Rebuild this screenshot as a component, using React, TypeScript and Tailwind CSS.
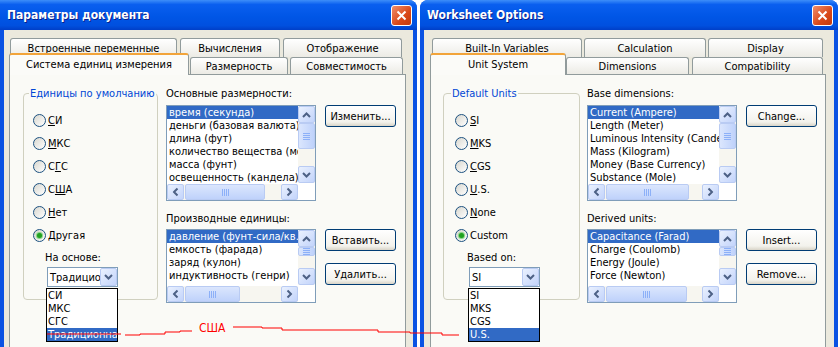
import React from "react";

type Tab = { label: string; cls: string };

const font = "font-['DejaVu_Sans_Condensed','DejaVu_Sans',sans-serif]";

function ScrollBtn({ dir, cls = "w-[17px] h-[17px]" }: { dir: "up" | "down" | "left" | "right"; cls?: string }) {
  const rot = { up: "rotate-180", down: "", left: "rotate-90", right: "-rotate-90" }[dir];
  return (
    <div className={`${cls} shrink-0 rounded-[2px] border border-[#b9cbf3] bg-[linear-gradient(135deg,#eaf1fe,#c3d4fb)] flex items-center justify-center`}>
      <svg width="9" height="6" viewBox="0 0 9 6" className={rot}>
        <path d="M1 1 L4.5 4.5 L8 1" fill="none" stroke="#4d6185" strokeWidth="2" />
      </svg>
    </div>
  );
}

function VScroll({ thumb }: { thumb: string }) {
  return (
    <div className="w-[17px] flex flex-col bg-[#f7f6f0]">
      <ScrollBtn dir="up" />
      <div className={`${thumb} w-[17px] rounded-[2px] border border-[#b9cbf3] bg-[linear-gradient(to_right,#dbe6fd,#bfd2fb)] flex flex-col items-center justify-center gap-[1px]`}>
        <span className="w-[7px] h-[1px] bg-[#8cb0f8]" />
        <span className="w-[7px] h-[1px] bg-[#8cb0f8]" />
        <span className="w-[7px] h-[1px] bg-[#8cb0f8]" />
        <span className="w-[7px] h-[1px] bg-[#8cb0f8]" />
      </div>
      <div className="flex-1" />
      <ScrollBtn dir="down" />
    </div>
  );
}

function HScroll({ thumb }: { thumb: string }) {
  return (
    <div className="flex-1 flex bg-[#f7f6f0]">
      <ScrollBtn dir="left" cls="w-[17px] h-[16px]" />
      <div className={`${thumb} h-[16px] ml-[1px] rounded-[2px] border border-[#b9cbf3] bg-[linear-gradient(to_bottom,#dbe6fd,#bfd2fb)] flex items-center justify-center gap-[1px]`}>
        <span className="w-[1px] h-[7px] bg-[#8cb0f8]" />
        <span className="w-[1px] h-[7px] bg-[#8cb0f8]" />
        <span className="w-[1px] h-[7px] bg-[#8cb0f8]" />
        <span className="w-[1px] h-[7px] bg-[#8cb0f8]" />
      </div>
      <div className="flex-1" />
      <ScrollBtn dir="right" cls="w-[17px] h-[16px]" />
    </div>
  );
}

function ListBox({ items, h, vThumb, hThumb }: { items: string[]; h: string; vThumb: string; hThumb: string }) {
  return (
    <div className={`${h} border border-[#7f9db9] bg-white flex flex-col`}>
      <div className="flex flex-1 min-h-0">
        <div className="flex-1 min-w-0 overflow-hidden">
          {items.map((t, i) => (
            <div
              key={t}
              className={`h-[13px] leading-[13px] pl-[2px] whitespace-nowrap ${i === 0 ? "bg-[#316ac5] text-white" : ""}`}
            >
              {t}
            </div>
          ))}
        </div>
        <VScroll thumb={vThumb} />
      </div>
      <div className="flex h-[16px] mt-[1px]">
        <HScroll thumb={hThumb} />
        <div className="w-[17px] bg-white" />
      </div>
    </div>
  );
}

function Btn({ children, cls = "" }: { children: React.ReactNode; cls?: string }) {
  return (
    <button className={`${cls} h-[22px] w-[71px] rounded-[3px] border border-[#003c74] bg-[linear-gradient(to_bottom,#ffffff,#f3f2ec_80%,#d9d4c8)] flex items-center justify-center leading-[13px] text-black`}>
      {children}
    </button>
  );
}

function Radio({ label, checked }: { label: React.ReactNode; checked?: boolean }) {
  return (
    <div className="flex items-center h-[23px]">
      <span className="w-[13px] h-[13px] rounded-full border border-[#1c5180] bg-[linear-gradient(135deg,#d8d7cf,#ffffff)] flex items-center justify-center">
        {checked && <span className="w-[5px] h-[5px] rounded-full bg-[#21a121] shadow-[0_0_1px_1px_#7bd17b]" />}
      </span>
      <span className="ml-[2px] leading-[13px]">{label}</span>
    </div>
  );
}

type DialogProps = {
  title: string;
  frame: string;
  round: string;
  tabsWrap: string;
  row1: Tab[];
  active: Tab;
  row2: Tab[];
  panelPad: string;
  group: { legend: string; w: string; pad: string; radios: React.ReactNode[] };
  basedOn: string;
  comboText: string;
  popup: string[];
  midMl: string;
  baseLabel: string;
  baseItems: string[];
  baseThumb: string;
  derivedLabel: string;
  derivedItems: string[];
  derivedThumb: string;
  buttons: string[];
};

function Dialog(p: DialogProps) {
  return (
    <div className={`${p.frame} ${p.round} h-[370px] flex flex-col bg-[#0a52e3] overflow-hidden`}>
      {/* title bar */}
      <div className="h-[30px] shrink-0 flex items-center pl-[7px] pr-[5px] bg-[linear-gradient(to_bottom,#3d8ef9_0%,#0a5fef_15%,#0056e6_55%,#0050df_85%,#003fc8_100%)]">
        <span className="flex-1 text-white font-bold text-[12px] leading-[16px] [text-shadow:1px_1px_0_#0a1e8a] font-['DejaVu_Sans_Condensed','DejaVu_Sans',sans-serif]">
          {p.title}
        </span>
        <div className="w-[21px] h-[21px] rounded-[3px] border border-white bg-[linear-gradient(135deg,#f08e6c,#d94818_60%,#c23a0e)] flex items-center justify-center">
          <svg width="11" height="11" viewBox="0 0 11 11">
            <path d="M1.5 1.5 L9.5 9.5 M9.5 1.5 L1.5 9.5" stroke="white" strokeWidth="2" />
          </svg>
        </div>
      </div>
      {/* body */}
      <div className="flex-1 mx-[4px] bg-[#ebe9dd] pt-[8px]">
        <div className={`${p.tabsWrap} flex flex-col`}>
          <div className="flex h-[19px]">
            {p.row1.map((t) => (
              <div
                key={t.label}
                className={`${t.cls} h-[19px] rounded-t-[3px] border border-b-0 border-[#919b9c] bg-[linear-gradient(to_bottom,#ffffff,#ecebe5)] flex items-center justify-center leading-[13px]`}
              >
                {t.label}
              </div>
            ))}
          </div>
          <div className="flex h-[17px] items-end">
            <div
              className={`${p.active.cls} relative z-10 h-[22px] -mb-[1px] self-end rounded-t-[3px] border border-b-0 border-[#919b9c] border-t-[2px] border-t-[#f2a43a] bg-[#fbfbf8] flex items-start justify-center pt-[3px] leading-[13px]`}
            >
              {p.active.label}
            </div>
            {p.row2.map((t) => (
              <div
                key={t.label}
                className={`${t.cls} h-[17px] rounded-t-[3px] border border-b-0 border-[#919b9c] bg-[linear-gradient(to_bottom,#ffffff,#ecebe5)] flex items-center justify-center leading-[13px]`}
              >
                {t.label}
              </div>
            ))}
          </div>
          {/* panel */}
          <div className={`h-[290px] border border-[#919b9c] bg-[#fafaf6] flex pt-[12px] ${p.panelPad}`}>
            <fieldset className={`${p.group.w} ${p.group.pad} h-[213px] border border-[#d0d0bf] rounded-[4px] flex flex-col`}>
              <legend className="-ml-[4px] px-[1px] text-[#0046d5] leading-[13px] whitespace-nowrap">{p.group.legend}</legend>
              <div className="pt-[9px] flex flex-col">
                {p.group.radios.map((r, i) => (
                  <Radio key={i} label={r} checked={i === p.group.radios.length - 1} />
                ))}
              </div>
              <div className="ml-[12px] mt-[4px] leading-[13px]">{p.basedOn}</div>
              <div className="relative ml-[14px] mt-[3px] w-[71px] h-[20px] border border-[#7f9db9] bg-white flex items-center">
                <span className="flex-1 pl-[2px] overflow-hidden whitespace-nowrap leading-[13px]">{p.comboText}</span>
                <ScrollBtn dir="down" cls="w-[17px] h-[18px]" />
                <div className="absolute left-[-2px] top-[20px] w-[72px] border border-black bg-white z-20">
                  {p.popup.map((t, i) => (
                    <div
                      key={t}
                      className={`h-[13px] leading-[13px] pl-[1px] whitespace-nowrap overflow-hidden ${i === p.popup.length - 1 ? "bg-[#316ac5] text-white" : ""}`}
                    >
                      {t}
                    </div>
                  ))}
                </div>
              </div>
            </fieldset>
            <div className={`${p.midMl} w-[150px] flex flex-col`}>
              <div className="leading-[13px]">{p.baseLabel}</div>
              <ListBox items={p.baseItems} h="h-[96px] mt-[5px]" vThumb="h-[26px]" hThumb={p.baseThumb} />
              <div className="leading-[13px] mt-[11px]">{p.derivedLabel}</div>
              <ListBox items={p.derivedItems} h="h-[74px] mt-[4px]" vThumb="h-[9px]" hThumb={p.derivedThumb} />
            </div>
            <div className="ml-[9px] flex flex-col">
              <Btn cls="mt-[18px]">{p.buttons[0]}</Btn>
              <Btn cls="mt-[102px]">{p.buttons[1]}</Btn>
              <Btn cls="mt-[12px]">{p.buttons[2]}</Btn>
            </div>
          </div>
        </div>
      </div>
    </div>
  );
}

export default function App() {
  return (
    <div className={`relative w-[840px] h-[347px] overflow-hidden bg-white flex gap-[3px] text-[11px] text-black ${font}`}>
      <Dialog
        title="Параметры документа"
        frame="w-[417px]"
        round="rounded-tr-[8px]"
        tabsWrap="ml-[5px] w-[397px]"
        row1={[
          { label: "Встроенные переменные", cls: "w-[167px] ml-[1px]" },
          { label: "Вычисления", cls: "w-[100px] ml-[3px]" },
          { label: "Отображение", cls: "w-[119px] ml-[3px]" },
        ]}
        active={{ label: "Система единиц измерения", cls: "w-[180px]" }}
        row2={[
          { label: "Размерность", cls: "w-[98px] ml-[1px]" },
          { label: "Совместимость", cls: "w-[113px] ml-[2px]" },
        ]}
        panelPad="pl-[13px]"
        group={{
          legend: "Единицы по умолчанию",
          w: "w-[135px]",
          pad: "pl-[9px]",
          radios: [
            <><u>С</u>И</>,
            <><u>М</u>КС</>,
            <>С<u>Г</u>С</>,
            <>С<u>Ш</u>А</>,
            <><u>Н</u>ет</>,
            <>Другая</>,
          ],
        }}
        basedOn="На основе:"
        comboText="Традицио"
        popup={["СИ", "МКС", "СГС", "Традиционна."]}
        midMl="ml-[8px]"
        baseLabel="Основные размерности:"
        baseItems={[
          "время (секунда)",
          "деньги (базовая валюта)",
          "длина (фут)",
          "количество вещества (моль)",
          "масса (фунт)",
          "освещенность (кандела)",
        ]}
        baseThumb="w-[80px]"
        derivedLabel="Производные единицы:"
        derivedItems={["давление (фунт-сила/кв. дюйм)", "емкость (фарада)", "заряд (кулон)", "индуктивность (генри)"]}
        derivedThumb="w-[55px]"
        buttons={["Изменить...", "Вставить...", "Удалить..."]}
      />
      <Dialog
        title="Worksheet Options"
        frame="w-[418px]"
        round="rounded-t-[8px]"
        tabsWrap="ml-[6px] w-[396px]"
        row1={[
          { label: "Built-In Variables", cls: "w-[150px] ml-[2px]" },
          { label: "Calculation", cls: "w-[122px] ml-[2px]" },
          { label: "Display", cls: "w-[115px] ml-[2px]" },
        ]}
        active={{ label: "Unit System", cls: "w-[136px]" }}
        row2={[
          { label: "Dimensions", cls: "w-[123px]" },
          { label: "Compatibility", cls: "w-[131px] ml-[3px]" },
        ]}
        panelPad="pl-[12px]"
        group={{
          legend: "Default Units",
          w: "w-[137px]",
          pad: "pl-[11px]",
          radios: [
            <><u>S</u>I</>,
            <><u>M</u>KS</>,
            <><u>C</u>GS</>,
            <><u>U</u>.S.</>,
            <><u>N</u>one</>,
            <>Custom</>,
          ],
        }}
        basedOn="Based on:"
        comboText="SI"
        popup={["SI", "MKS", "CGS", "U.S."]}
        midMl="ml-[7px]"
        baseLabel="Base dimensions:"
        baseItems={[
          "Current (Ampere)",
          "Length (Meter)",
          "Luminous Intensity (Candela)",
          "Mass (Kilogram)",
          "Money (Base Currency)",
          "Substance (Mole)",
        ]}
        baseThumb="w-[83px]"
        derivedLabel="Derived units:"
        derivedItems={["Capacitance (Farad)", "Charge (Coulomb)", "Energy (Joule)", "Force (Newton)"]}
        derivedThumb="w-[81px]"
        buttons={["Change...", "Insert...", "Remove..."]}
      />
      {/* red annotation */}
      <svg className="absolute left-0 top-0 pointer-events-none z-30" width="840" height="347">
        <polyline points="47,334 121,334" fill="none" stroke="#ff0000" strokeWidth="1" />
        <polyline
          points="125,335 140,335 140,334 165,334 165,332 180,332 180,331 192,331"
          fill="none"
          stroke="#ff0000"
          strokeWidth="1"
        />
        <polyline
          points="233,327 262,327 262,328 282,328 282,330 378,330 378,332 410,332 410,333 442,333 442,335 459,335"
          fill="none"
          stroke="#ff0000"
          strokeWidth="1"
        />
      </svg>
      <div className="absolute left-[199px] top-[321px] text-[12px] leading-[14px] text-[#ff0000] z-30">США</div>
    </div>
  );
}
